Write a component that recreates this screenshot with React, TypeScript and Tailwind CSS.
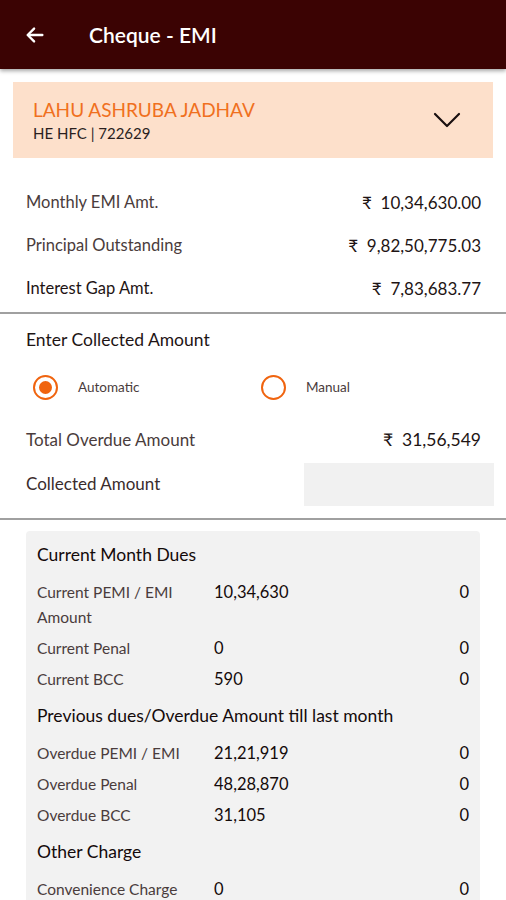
import React, { useState } from 'react';

const font = { fontFamily: 'Lato, "Noto Sans", sans-serif' };

interface DueRow {
  label: string;
  amount: string;
  paid: string;
}

const currentDues: DueRow[] = [
  { label: 'Current PEMI / EMI Amount', amount: '10,34,630', paid: '0' },
  { label: 'Current Penal', amount: '0', paid: '0' },
  { label: 'Current BCC', amount: '590', paid: '0' },
];

const previousDues: DueRow[] = [
  { label: 'Overdue PEMI / EMI', amount: '21,21,919', paid: '0' },
  { label: 'Overdue Penal', amount: '48,28,870', paid: '0' },
  { label: 'Overdue BCC', amount: '31,105', paid: '0' },
];

const otherCharges: DueRow[] = [{ label: 'Convenience Charge', amount: '0', paid: '0' }];

function SummaryRow({ label, value, dark }: { label: string; value: string; dark?: boolean }) {
  return (
    <div className="flex items-center justify-between h-[43px]">
      <span className={`text-[16.5px] ${dark ? 'text-[#1e1414]' : 'text-[#4a3c3c]'}`}>{label}</span>
      <span className="text-[17px] text-[#1e1414]">₹&nbsp; {value}</span>
    </div>
  );
}

function DueTable({ title, rows }: { title: string; rows: DueRow[] }) {
  return (
    <div className="flex flex-col">
      <div className="text-[17.5px] text-[#140a0a] leading-[24px] pt-[9px] pb-[10px]">{title}</div>
      {rows.map((r) => (
        <div key={r.label} className="flex items-start py-[3px] leading-[25px]">
          <span className="w-[177px] text-[15.5px] text-[#4a3c3c] pr-2">{r.label}</span>
          <span className="flex-1 text-[16.5px] text-[#140a0a]">{r.amount}</span>
          <span className="text-[16.5px] text-[#140a0a]">{r.paid}</span>
        </div>
      ))}
    </div>
  );
}

function Radio({ checked, label, onClick }: { checked: boolean; label: string; onClick: () => void }) {
  return (
    <button onClick={onClick} className="flex items-center gap-[20px]">
      <span className="w-[25px] h-[25px] rounded-full border-2 border-[#f0640f] flex items-center justify-center">
        {checked && <span className="w-[13px] h-[13px] rounded-full bg-[#f0640f]" />}
      </span>
      <span className="text-[13.5px] text-[#4a3c3c]">{label}</span>
    </button>
  );
}

export default function App() {
  const [mode, setMode] = useState<'auto' | 'manual'>('auto');

  return (
    <div className="w-[506px] h-[900px] overflow-hidden bg-white" style={font}>
      {/* App bar */}
      <div className="h-[69px] bg-[#3b0303] flex items-center px-[24px] shadow-[0_2px_4px_rgba(0,0,0,0.35)] relative z-10">
        <svg width="22" height="22" viewBox="0 0 24 24" fill="none" stroke="white" strokeWidth="2.6" strokeLinecap="round" strokeLinejoin="round">
          <path d="M20 12H5" />
          <path d="M11 5l-7 7 7 7" />
        </svg>
        <span className="ml-[43px] text-white text-[21px] font-semibold">Cheque - EMI</span>
      </div>

      {/* Customer card */}
      <div className="px-[13px] pt-[13px]">
        <div className="h-[76px] bg-[#fde0cb] flex items-center justify-between pl-[20px] pr-[32px]">
          <div className="flex flex-col">
            <span className="text-[19px] text-[#f0701e] leading-[26px]">LAHU ASHRUBA JADHAV</span>
            <span className="text-[15px] text-[#2a1e1e] leading-[20px]">HE HFC | 722629</span>
          </div>
          <svg width="28" height="16" viewBox="0 0 28 16" fill="none" stroke="#1a1010" strokeWidth="2.2" strokeLinecap="round" strokeLinejoin="round">
            <path d="M2 2l12 12 12-12" />
          </svg>
        </div>
      </div>

      {/* Summary */}
      <div className="px-[26px] pr-[25px] pt-[23px] pb-[2px]">
        <SummaryRow label="Monthly EMI Amt." value="10,34,630.00" />
        <SummaryRow label="Principal Outstanding" value="9,82,50,775.03" />
        <SummaryRow label="Interest Gap Amt." value="7,83,683.77" dark />
      </div>

      <div className="h-[2px] bg-[#a0a0a0]" />

      {/* Collected amount */}
      <div className="pl-[26px] pt-[14px]">
        <div className="text-[17.5px] text-[#1e1414] leading-[24px]">Enter Collected Amount</div>
        <div className="flex items-center h-[46px] mt-[12px] pl-[7px]">
          <div className="w-[228px]">
            <Radio checked={mode === 'auto'} label="Automatic" onClick={() => setMode('auto')} />
          </div>
          <Radio checked={mode === 'manual'} label="Manual" onClick={() => setMode('manual')} />
        </div>
        <div className="flex items-center justify-between h-[44px] mt-[8px] pr-[25px]">
          <span className="text-[17px] text-[#4a3c3c]">Total Overdue Amount</span>
          <span className="text-[17.5px] text-[#1e1414]">₹&nbsp; 31,56,549</span>
        </div>
        <div className="flex items-center justify-between h-[44px] pr-[12px]">
          <span className="text-[17px] text-[#3a2c2c]">Collected Amount</span>
          <input className="w-[190px] h-[43px] bg-[#f1f1f1] outline-none px-2 text-[16px]" />
        </div>
      </div>

      <div className="h-[2px] bg-[#a0a0a0] mt-[12px]" />

      {/* Dues breakdown */}
      <div className="px-[26px] pt-[11px]">
        <div className="bg-[#f2f2f2] rounded-[4px] pl-[11px] pr-[11px] pt-[3px] pb-4 flex flex-col">
          <DueTable title="Current Month Dues" rows={currentDues} />
          <DueTable title="Previous dues/Overdue Amount till last month" rows={previousDues} />
          <DueTable title="Other Charge" rows={otherCharges} />
        </div>
      </div>
    </div>
  );
}
